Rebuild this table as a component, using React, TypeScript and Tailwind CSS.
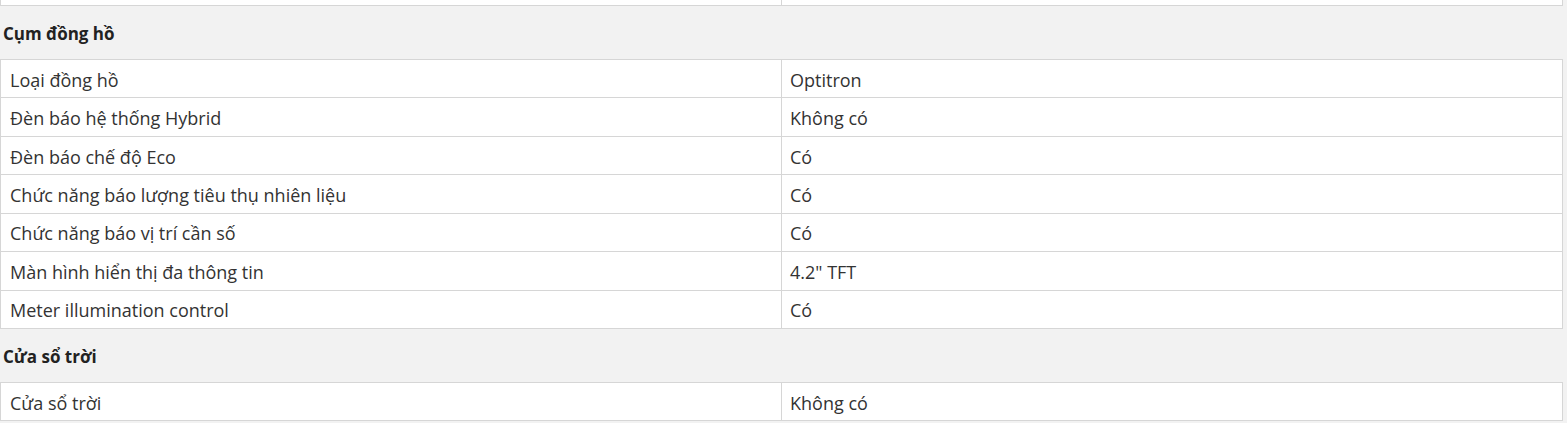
const groups = [
  {
    title: 'Cụm đồng hồ',
    rows: [
      ['Loại đồng hồ', 'Optitron'],
      ['Đèn báo hệ thống Hybrid', 'Không có'],
      ['Đèn báo chế độ Eco', 'Có'],
      ['Chức năng báo lượng tiêu thụ nhiên liệu', 'Có'],
      ['Chức năng báo vị trí cần số', 'Có'],
      ['Màn hình hiển thị đa thông tin', '4.2" TFT'],
      ['Meter illumination control', 'Có'],
    ],
  },
  {
    title: 'Cửa sổ trời',
    rows: [['Cửa sổ trời', 'Không có']],
  },
]

function SpecRow({ label, value }: { label: string; value: string }) {
  return (
    <div className="grid h-[38.43px] grid-cols-[781px_1fr] border-t border-[#d6d6d6] bg-white">
      <div className="flex items-center border-r border-[#d6d6d6] pt-[3px] pl-[9px]">{label}</div>
      <div className="flex items-center pt-[3px] pl-[8px]">{value}</div>
    </div>
  )
}

export default function App() {
  return (
    <div
      className="h-[423px] w-full overflow-hidden bg-[#f2f2f2] pr-[4px] text-[18px] text-[#333]"
      style={{ fontFamily: '"Open Sans", "Noto Sans", sans-serif' }}
    >
      {/* tail of the previous table */}
      <div className="grid h-[6px] grid-cols-[781px_1fr] border-r border-b border-l border-[#d6d6d6] bg-white">
        <div className="border-r border-[#d6d6d6]" />
        <div />
      </div>
      {groups.map((g) => (
        <div key={g.title}>
          <div className="flex h-[53px] items-center pt-[2px] pl-[3px] text-[17px] font-bold text-[#222]">{g.title}</div>
          <div className="border-r border-b border-l border-[#d6d6d6]">
            {g.rows.map(([label, value]) => (
              <SpecRow key={label} label={label} value={value} />
            ))}
          </div>
        </div>
      ))}
    </div>
  )
}
